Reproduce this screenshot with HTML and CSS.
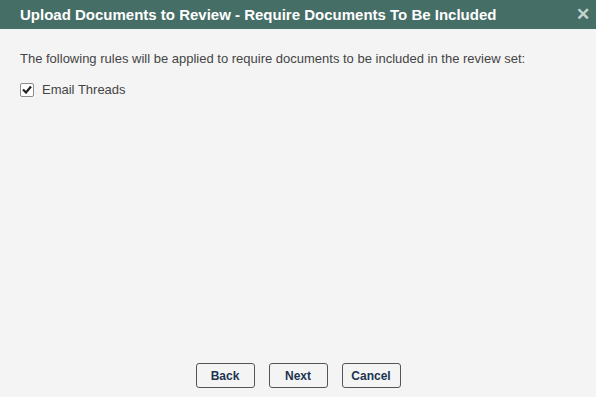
FILE: index.html
```html
<!DOCTYPE html>
<html lang="en">
<head>
    <meta charset="UTF-8">
    <title>Upload Documents to Review</title>
    <link rel="stylesheet" href="styles.css">
</head>
<body>
    <div class="dialog">
        <div class="titleBar">
            <span class="title">Upload Documents to Review - Require Documents To Be Included</span>
            <span class="close">&#x2715;</span>
        </div>
        <div class="content">
            <p class="intro">The following rules will be applied to require documents to be included in the review set:</p>
            <label class="rule">
                <span class="check">
                    <svg width="10" height="9" viewBox="0 0 10 9"><path d="M1 4.5 L4 7.5 L9 1.5" fill="none" stroke="#222" stroke-width="2.2"/></svg>
                </span>
                Email Threads
            </label>
        </div>
        <div class="buttons">
            <button>Back</button>
            <button>Next</button>
            <button>Cancel</button>
        </div>
    </div>
</body>
</html>
```

FILE: styles.css
```css
body {
  margin: 0;
  background-color: #f4f4f4;
  font-family: "Liberation Sans", Arial, sans-serif;
}

.dialog {
  width: 596px;
  height: 397px;
  display: flex;
  flex-direction: column;
}

.titleBar {
  height: 29px;
  background-color: #456e66;
  display: flex;
  align-items: center;
  justify-content: space-between;
  padding: 0 6px 0 20px;
}

.title {
  color: #fff;
  font-weight: bold;
  font-size: 15px;
}

.close {
  color: #c3d3d0;
  font-weight: bold;
  font-size: 17px;
}

.content {
  flex: 1;
  padding: 22px 20px 0 20px;
}

.intro {
  margin: 0 0 16px 0;
  font-size: 13px;
  color: #444;
}

.rule {
  display: flex;
  align-items: center;
  gap: 8px;
  font-size: 13px;
  color: #444;
}

.check {
  width: 12px;
  height: 12px;
  border: 1px solid #8c8c8c;
  border-radius: 2px;
  background-color: #fff;
  display: flex;
  align-items: center;
  justify-content: center;
}

.buttons {
  display: flex;
  justify-content: center;
  gap: 14px;
  padding: 0 0 9px 0;
}

.buttons button {
  width: 59px;
  height: 25px;
  background-color: #f4f4f4;
  border: 1px solid #555;
  border-radius: 3px;
  font-family: "Liberation Sans", Arial, sans-serif;
  font-weight: bold;
  font-size: 12px;
  color: #1c3550;
  padding: 0;
}
```
